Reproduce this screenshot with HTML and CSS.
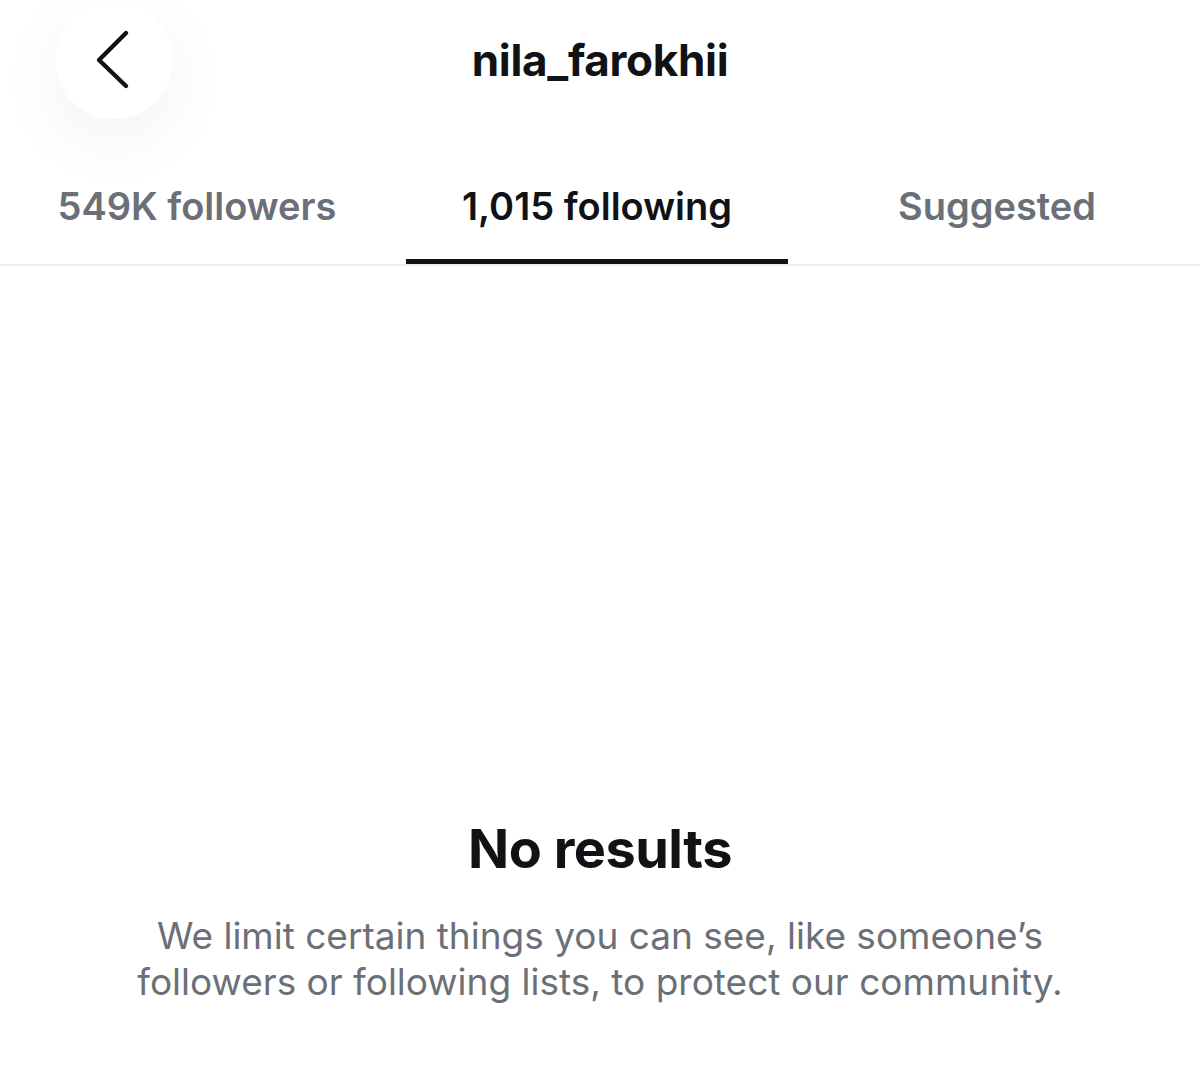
FILE: index.html
```html
<!DOCTYPE html>
<html lang="en">
<head>
    <meta charset="UTF-8">
    <meta name="viewport" content="width=device-width, initial-scale=1.0">
    <title>nila_farokhii</title>
    <link rel="stylesheet" href="styles.css">
</head>
<body>
    <header class="top-bar">
        <button class="back-btn" aria-label="Back">
            <svg width="40" height="64" viewBox="0 0 40 64">
                <path d="M33 5 L6 32 L33 58" fill="none" stroke="#111318" stroke-width="4.4" stroke-linecap="round" stroke-linejoin="round"/>
            </svg>
        </button>
        <h1 class="username">nila_farokhii</h1>
    </header>

    <nav class="tabs">
        <a class="tab">549K followers</a>
        <a class="tab active">1,015 following</a>
        <a class="tab">Suggested</a>
    </nav>

    <main class="empty">
        <h2>No results</h2>
        <p>We limit certain things you can see, like someone’s<br>followers or following lists, to protect our community.</p>
    </main>
</body>
</html>
```

FILE: styles.css
```css
body {
    margin: 0;
    font-family: Inter, "Liberation Sans", sans-serif;
    background: #fff;
    color: #101216;
}
.top-bar {
    position: relative;
    height: 120px;
    display: flex;
    align-items: center;
    justify-content: center;
}
.back-btn {
    position: absolute;
    left: 55px;
    top: 1px;
    width: 118px;
    height: 118px;
    border: none;
    border-radius: 50%;
    background: #fff;
    box-shadow: 0 20px 70px rgba(0, 0, 0, 0.055);
    display: flex;
    align-items: center;
    justify-content: center;
    padding: 0;
}
.back-btn svg {
    margin-left: -2px;
}
.username {
    margin: 0;
    font-size: 44px;
    font-weight: 700;
    letter-spacing: -0.3px;
}
.tabs {
    display: grid;
    grid-template-columns: repeat(3, 1fr);
    border-bottom: 2px solid #efefef;
}
.tab {
    margin: 0 12px 0 6px;
    height: 144px;
    display: flex;
    align-items: center;
    justify-content: center;
    padding-top: 28px;
    box-sizing: border-box;
    font-size: 38px;
    font-weight: 600;
    color: #6b6f77;
}
.tab.active {
    color: #101216;
    box-shadow: inset 0 -5px 0 #101216;
}
.empty {
    text-align: center;
    padding-top: 550px;
}
.empty h2 {
    margin: 0;
    font-size: 54px;
    font-weight: 700;
    letter-spacing: -0.5px;
}
.empty p {
    margin: 32px 0 0;
    font-size: 37px;
    line-height: 46px;
    color: #6b6f77;
}
```
